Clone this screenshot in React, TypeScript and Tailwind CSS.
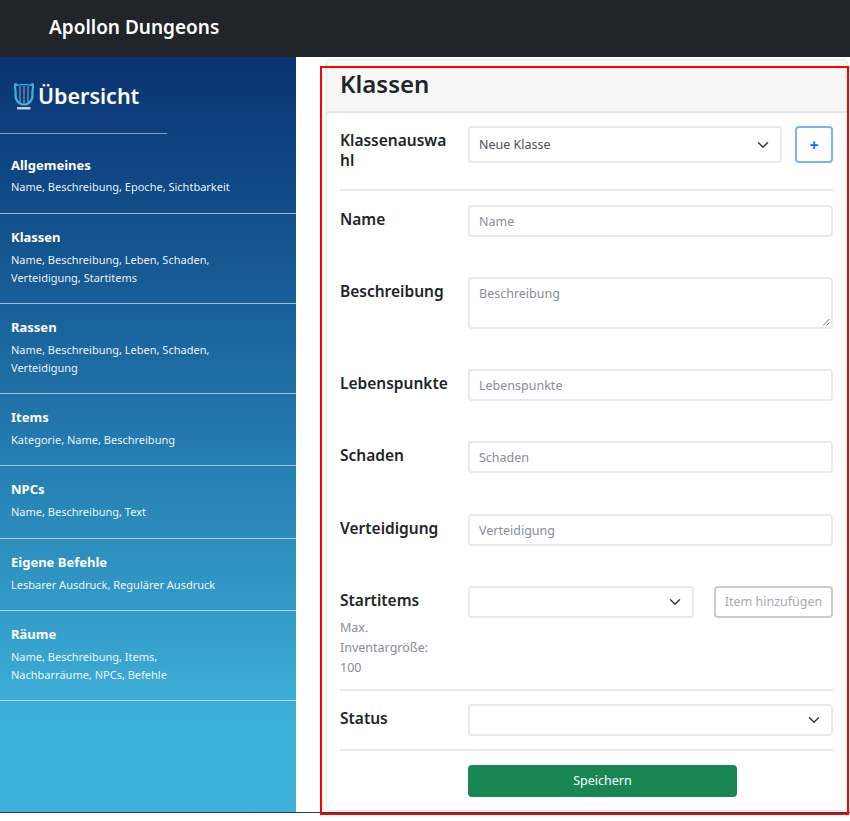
const sections = [
  { title: "Allgemeines", lines: ["Name, Beschreibung, Epoche, Sichtbarkeit"], h: "h-[80px] pt-[22px]", gap: "mt-[4px]" },
  { title: "Klassen", lines: ["Name, Beschreibung, Leben, Schaden,", "Verteidigung, Startitems"], h: "h-[90px] pt-[14px]", gap: "mt-[5px]" },
  { title: "Rassen", lines: ["Name, Beschreibung, Leben, Schaden,", "Verteidigung"], h: "h-[90px] pt-[14px]", gap: "mt-[5px]" },
  { title: "Items", lines: ["Kategorie, Name, Beschreibung"], h: "h-[72px] pt-[14px]", gap: "mt-[5px]" },
  { title: "NPCs", lines: ["Name, Beschreibung, Text"], h: "h-[73px] pt-[14px]", gap: "mt-[5px]" },
  { title: "Eigene Befehle", lines: ["Lesbarer Ausdruck, Regulärer Ausdruck"], h: "h-[72px] pt-[14px]", gap: "mt-[5px]" },
  { title: "Räume", lines: ["Name, Beschreibung, Items,", "Nachbarräume, NPCs, Befehle"], h: "h-[90px] pt-[14px]", gap: "mt-[5px]" },
];

function Chevron() {
  return (
    <svg width="12" height="12" viewBox="0 0 16 16" fill="none" stroke="#343a40" strokeWidth="2" strokeLinecap="round" strokeLinejoin="round">
      <path d="M2 5l6 6 6-6" />
    </svg>
  );
}

function Lyre() {
  return (
    <svg width="22" height="28" viewBox="0 0 22 28" fill="none" className="shrink-0">
      <circle cx="2.6" cy="2.6" r="1.6" fill="#3eb1da" />
      <circle cx="19.4" cy="2.6" r="1.6" fill="#3eb1da" />
      <path d="M2.2 3C1.4 6 3 8 2.6 11c-.4 3 .2 6 1.6 8 1.2 1.7 3 3 4.8 3.4h4c1.8-.4 3.6-1.7 4.8-3.4 1.4-2 2-5 1.6-8-.4-3 1.2-5 .4-8" stroke="#3eb1da" strokeWidth="2.2" />
      <path d="M3 3.4c5-1 11-1 16 0" stroke="#3eb1da" strokeWidth="1.3" />
      <path d="M7 4v17M11 4v17M15 4v17" stroke="#8fa9c8" strokeWidth="1" />
      <path d="M4 25h13.5v2.5H4z" fill="#c3ccd8" />
    </svg>
  );
}

function Select({ text, className }: { text?: string; className: string }) {
  return (
    <div className={`flex items-center justify-between rounded-[4px] border-2 border-[#e6e9ee] bg-white pl-[9px] pr-[11px] text-[12.5px] text-[#495057] ${className}`}>
      <span className="pt-[1px]">{text}</span>
      <Chevron />
    </div>
  );
}

function Field({ label, h = "h-8", mb = "mb-10", tall }: { label: string; h?: string; mb?: string; tall?: boolean }) {
  return (
    <div className={`flex ${mb}`}>
      <label className="w-[128px] shrink-0 pt-[1px] text-[15.5px] leading-[26px] font-semibold text-[#212529]">{label}</label>
      <div className={`relative flex-1 rounded-[4px] border-2 border-[#e6e9ee] bg-white px-[9px] text-[12.5px] text-[#868e96] ${h} ${tall ? "pt-[6px]" : "flex items-center pt-[2px]"}`}>
        {label}
        {tall && (
          <svg width="8" height="8" viewBox="0 0 8 8" className="absolute right-[1px] bottom-[1px]" stroke="#6c757d" strokeWidth="1">
            <path d="M7.5 1L1 7.5M7.5 4.5L4.5 7.5" />
          </svg>
        )}
      </div>
    </div>
  );
}

export default function App() {
  return (
    <div className="relative h-[821px] w-[850px] overflow-hidden bg-white font-['Noto_Sans','Open_Sans',sans-serif]">
      <header className="flex h-[57px] items-center bg-[#212529] pb-[3px] pl-[49px] text-[19px] font-semibold text-white">
        Apollon Dungeons
      </header>

      <div className="flex h-[756px] border-b border-[#343a40]">
        {/* Sidebar */}
        <aside className="h-full w-[296px] shrink-0 bg-gradient-to-b from-[#0a3273] to-[#3eb1da] to-[88%] text-white">
          <div className="flex h-[76px] items-center pt-[1px] pl-[13px]">
            <Lyre />
            <span className="ml-[3px] text-[21.5px] leading-none font-semibold">Übersicht</span>
          </div>
          <div className="h-px w-[167px] bg-white/50" />
          {sections.map((s) => (
            <div key={s.title} className={`border-b border-white/60 pl-[11px] ${s.h}`}>
              <div className="text-[13px] leading-[18px] font-bold">{s.title}</div>
              {s.lines.map((l, i) => (
                <div key={l} className={`text-[11px] leading-[18px] text-white/95 ${i === 0 ? s.gap : ""}`}>{l}</div>
              ))}
            </div>
          ))}
        </aside>

        {/* Content */}
        <main className="flex-1 pt-[2px] pr-[2px] pl-[30px]">
          <div className="h-[752px] rounded-[4px] border border-[#e3e5e8] bg-white">
            <div className="h-[53px] border-b-2 border-[#e3e5e8] bg-[#f7f7f7] pt-[6px] pl-[13px] text-[24px] leading-[36px] font-semibold text-[#212529]">
              Klassen
            </div>
            <div className="pt-[13px] pr-[14px] pl-[13px]">
              <div className="flex h-[65px] border-b-2 border-[#e4e7ec]">
                <label className="w-[128px] shrink-0 pt-[4px] pr-[16px] text-[15.5px] leading-[20px] font-semibold break-all text-[#212529]">Klassenauswahl</label>
                <Select text="Neue Klasse" className="h-[37px] flex-1" />
                <button className="ml-[13px] flex h-[37px] w-[38px] items-center justify-center rounded-[4px] border-2 border-[#7db0f5] text-[16px] font-bold text-[#0d6efd]">+</button>
              </div>
              <div className="pt-[14px]">
                <Field label="Name" />
                <Field label="Beschreibung" h="h-[52px]" tall />
                <Field label="Lebenspunkte" />
                <Field label="Schaden" mb="mb-[41px]" />
                <Field label="Verteidigung" />
              </div>
              <div className="flex border-b-2 border-[#e4e7ec] pb-[11px]">
                <div className="w-[128px] shrink-0">
                  <div className="pt-[1px] text-[15.5px] leading-[26px] font-semibold text-[#212529]">Startitems</div>
                  <div className="mt-[5px] pr-[20px] text-[12.5px] leading-[20px] text-[#868e96]">Max. Inventargröße: 100</div>
                </div>
                <Select className="h-8 w-[226px]" />
                <button className="ml-[20px] h-8 flex-1 rounded-[4px] border-2 border-[#c9ccd0] text-[12.5px] whitespace-nowrap text-[#a4a9ae]">Item hinzufügen</button>
              </div>
              <div className="flex border-b-2 border-[#e4e7ec] pt-[13px] pb-[13px]">
                <label className="w-[128px] shrink-0 pt-[1px] text-[15.5px] leading-[26px] font-semibold text-[#212529]">Status</label>
                <Select className="h-8 flex-1" />
              </div>
              <div className="pt-[14px] pl-[128px]">
                <button className="h-8 w-[269px] rounded-[4px] bg-[#198754] text-[12.5px] text-white">Speichern</button>
              </div>
            </div>
          </div>
        </main>
      </div>

      {/* annotation frame drawn over the card */}
      <div className="absolute top-[66px] left-[320px] h-[749px] w-[529px] border-2 border-[#ff0000]" />
    </div>
  );
}
